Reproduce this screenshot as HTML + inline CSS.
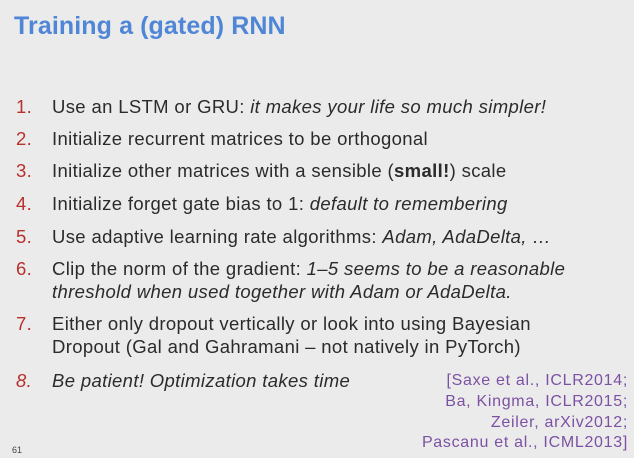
<!DOCTYPE html>
<html><head><meta charset="utf-8"><style>
body{margin:0;width:634px;height:458px;background:#ebebeb;overflow:hidden;position:relative;font-family:"Liberation Sans",sans-serif;color:#2b2b2b}
.t{position:absolute;left:14px;top:12px;font-size:25px;font-weight:bold;color:#4f86d6;letter-spacing:0.1px}
.l{position:absolute;left:0;font-size:18.5px;white-space:nowrap;letter-spacing:0.35px}
.n{position:absolute;left:16px;color:#b8302c}
.x{position:absolute;left:52px}
.c{position:absolute;right:6px;top:371px;text-align:right;font-size:16px;line-height:20.8px;color:#7c51a3;letter-spacing:0.7px}
.p{position:absolute;left:12px;top:445px;font-size:9px;color:#444}
</style></head><body>
<div class="t">Training a (gated) RNN</div>
<div class="l" style="top:96px"><span class="n">1.</span><span class="x">Use an LSTM or GRU: <i>it makes your life so much simpler!</i></span></div>
<div class="l" style="top:128px"><span class="n">2.</span><span class="x">Initialize recurrent matrices to be orthogonal</span></div>
<div class="l" style="top:160px"><span class="n">3.</span><span class="x">Initialize other matrices with a sensible (<b>small!</b>) scale</span></div>
<div class="l" style="top:193px"><span class="n">4.</span><span class="x">Initialize forget gate bias to 1: <i>default to remembering</i></span></div>
<div class="l" style="top:226px"><span class="n">5.</span><span class="x">Use adaptive learning rate algorithms: <i>Adam, AdaDelta, …</i></span></div>
<div class="l" style="top:258px"><span class="n">6.</span><span class="x">Clip the norm of the gradient: <i>1–5 seems to be a reasonable</i></span></div>
<div class="l" style="top:281px"><span class="x"><i>threshold when used together with Adam or AdaDelta.</i></span></div>
<div class="l" style="top:313px"><span class="n">7.</span><span class="x">Either only dropout vertically or look into using Bayesian</span></div>
<div class="l" style="top:336px"><span class="x">Dropout (Gal and Gahramani – not natively in PyTorch)</span></div>
<div class="l" style="top:370px"><span class="n"><i>8.</i></span><span class="x"><i>Be patient! Optimization takes time</i></span></div>
<div class="c">[Saxe et al., ICLR2014;<br>Ba, Kingma, ICLR2015;<br>Zeiler, arXiv2012;<br>Pascanu et al., ICML2013]</div>
<div class="p">61</div>
</body></html>
